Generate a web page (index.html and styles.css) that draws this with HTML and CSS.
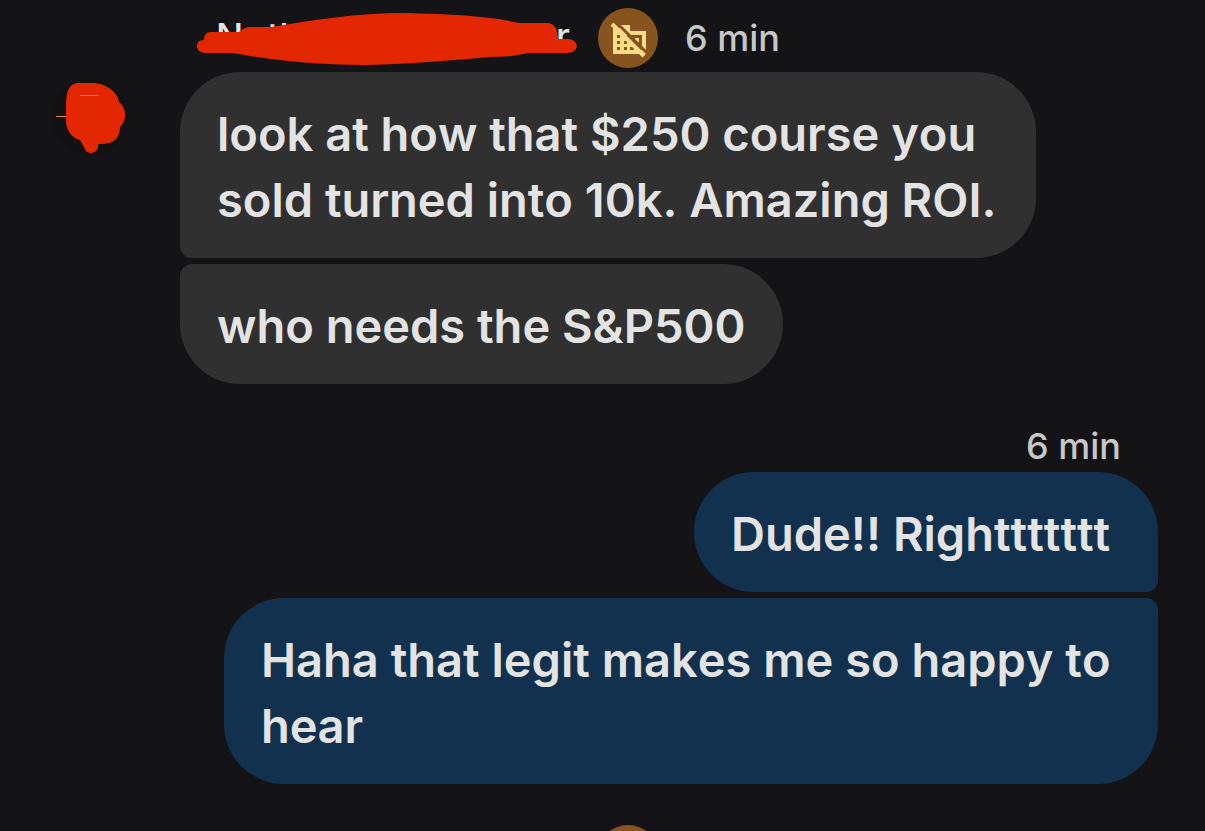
FILE: index.html
```html
<!DOCTYPE html>
<html lang="en">
<head>
<meta charset="utf-8">
<meta name="viewport" content="width=device-width, initial-scale=1">
<title>Conversation</title>
<link rel="stylesheet" href="styles.css">
</head>
<body>
<main class="chat">
  <section class="group incoming">
    <svg class="avatar" viewBox="0 0 84 84" aria-hidden="true">
      <circle class="avatar-disc" cx="42" cy="42" r="38"/>
      <path class="scribble" d="M29 8H45C57 8 70 17 71 27C79 33 79 46 72 52C72 64 65 70 50 69C52 76 43 81 38 76L32 65C23 63 18 54 18 46V30C18 17 21 9 29 8Z"/>
      <path class="spark" d="M32 20.500H50M8 41.500H18"/>
    </svg>
    <div class="thread">
      <header class="meta">
        <div class="name">
          <span class="name-text"><span>N</span><span>th</span><span class="name-end">r</span></span>
          <svg class="redaction" viewBox="0 0 384 56" aria-hidden="true">
            <path class="scribble" d="M15 22H43C47 19 49 17 55 17H75C119 10 159 3 209 3C259 4 299 7 323 13H351C359 13 362 20 362 29H371C384 29 384 43 371 43H332C319 46 309 47 293 47C259 50 219 54 169 55C114 55 69 49 37 43H9C-1 43 -2 30 8 30C8 25 10 22 15 22Z"/>
          </svg>
        </div>
        <svg class="badge" viewBox="0 0 60 60" aria-hidden="true">
          <circle class="badge-disc" cx="30" cy="30" r="30"/>
          <path class="badge-fill" fill-rule="evenodd" d="M22 17H32V23H48V46H15V20H22ZM19 27V30H22V27ZM19 33V36H22V33ZM19 39V42H22V39ZM26 33V36H29V33ZM26 39V42H29V39ZM32 39V42H36V39ZM29 27V30L41 42H44V27ZM37 30H41V34H37Z"/>
          <path class="badge-gap" d="M18 14L50 46"/>
          <path class="badge-slash" d="M14 16L46 48"/>
        </svg>
        <time class="time">6 min</time>
      </header>
      <p class="bubble first">look at how that $250 course you sold turned into 10k. Amazing ROI.</p>
      <p class="bubble last">who needs the S&amp;P500</p>
    </div>
  </section>
  <section class="group outgoing">
    <time class="time">6 min</time>
    <p class="bubble first">Dude!! Righttttttt</p>
    <p class="bubble last">Haha that legit makes me so happy to hear</p>
  </section>
  <footer class="next">
    <svg class="badge" viewBox="0 0 60 60" aria-hidden="true"><circle class="badge-disc" cx="30" cy="30" r="30"/></svg>
  </footer>
</main>
</body>
</html>
```
FILE: styles.css
```css
* { box-sizing: border-box; }
body {
  margin: 0;
  background: #141416;
  color: #e3e3e3;
  font-family: Inter, "Liberation Sans", sans-serif;
  font-weight: 500;
}
.chat {
  height: 100vh;
  overflow: hidden;
  padding: 8px 47px 0 48px;
}
.group { display: flex; }
.incoming { gap: 48px; }
.thread {
  display: flex;
  flex: 1;
  flex-direction: column;
  align-items: flex-start;
  gap: 6px;
}
.avatar {
  flex: none;
  width: 84px;
  height: 84px;
  margin-top: 67px;
}
.avatar-disc { fill: #121213; }
.scribble { fill: #e22702; }
.spark { fill: none; stroke: #d98258; stroke-width: 1; }
.meta {
  display: flex;
  align-items: center;
  height: 60px;
  margin-bottom: -2px;
  padding-left: 16px;
}
.name {
  position: relative;
  width: 384px;
  margin-right: 18px;
}
.name-text {
  display: flex;
  gap: 24px;
  padding: 0 10px 4px 20px;
  font-size: 36px;
  line-height: 52px;
}
.name-end { margin-left: auto; }
.redaction {
  position: absolute;
  top: 0;
  left: 0;
  width: 384px;
  height: 56px;
}
.badge { flex: none; width: 60px; height: 60px; }
.badge-disc { fill: #87531f; }
.badge-fill { fill: #fddc87; }
.badge-gap { stroke: #87531f; stroke-width: 3; }
.badge-slash { stroke: #fddc87; stroke-width: 4; }
.time {
  color: #c7c7c7;
  font-size: 36px;
  line-height: 48px;
}
.meta .time { margin-left: 27px; }
.bubble {
  min-width: 464px;
  margin: 0;
  padding: 29px 37px 25px;
  border-radius: 60px;
  font-size: 47px;
  font-weight: 600;
  font-kerning: none;
  line-height: 66px;
}
.incoming .bubble { max-width: 856px; background: #303030; }
.incoming .first { border-bottom-left-radius: 12px; }
.incoming .last { border-top-left-radius: 12px; }
.outgoing {
  flex-direction: column;
  align-items: flex-end;
  gap: 6px;
  margin-top: 38px;
}
.outgoing .time { margin: 0 37px -4px 0; }
.outgoing .bubble { max-width: 934px; background: #12314f; }
.outgoing .first { border-bottom-right-radius: 12px; }
.outgoing .last { border-top-right-radius: 12px; }
.next { margin-top: 41px; padding-left: 550px; }
```
